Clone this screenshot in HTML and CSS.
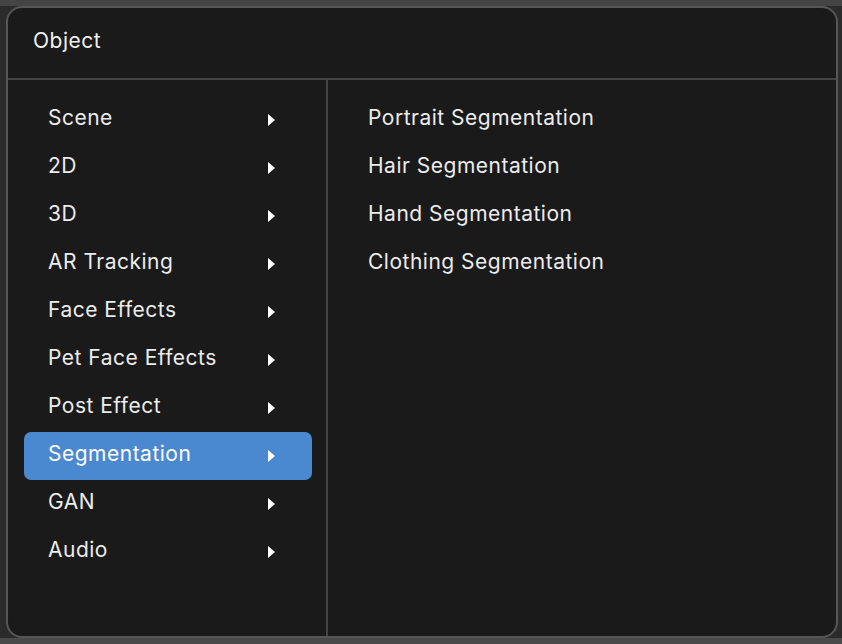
FILE: index.html
```html
<!DOCTYPE html>
<html>
<head>
<meta charset="utf-8">
<link rel="stylesheet" href="styles.css">
</head>
<body>
<div class="frame">
  <div class="dialog">
    <div class="header">Object</div>
    <div class="body">
      <ul class="menu">
        <li class="item"><span>Scene</span><i class="arrow"></i></li>
        <li class="item"><span>2D</span><i class="arrow"></i></li>
        <li class="item"><span>3D</span><i class="arrow"></i></li>
        <li class="item"><span>AR Tracking</span><i class="arrow"></i></li>
        <li class="item"><span>Face Effects</span><i class="arrow"></i></li>
        <li class="item"><span>Pet Face Effects</span><i class="arrow"></i></li>
        <li class="item"><span>Post Effect</span><i class="arrow"></i></li>
        <li class="item active"><span>Segmentation</span><i class="arrow"></i></li>
        <li class="item"><span>GAN</span><i class="arrow"></i></li>
        <li class="item"><span>Audio</span><i class="arrow"></i></li>
      </ul>
      <ul class="submenu">
        <li class="sub">Portrait Segmentation</li>
        <li class="sub">Hair Segmentation</li>
        <li class="sub">Hand Segmentation</li>
        <li class="sub">Clothing Segmentation</li>
      </ul>
    </div>
  </div>
</div>
</body>
</html>
```

FILE: styles.css
```css
html, body {
  margin: 0;
  padding: 0;
}
body {
  width: 842px;
  height: 644px;
  overflow: hidden;
  background: #4a4a4a;
  font-family: Inter, "Noto Sans", sans-serif;
}
.frame {
  height: 638px;
  background: linear-gradient(#444 0 6px, #2b2b2b 6px);
  padding: 6px 4px 0 6px;
  box-sizing: border-box;
}
.dialog {
  height: 632px;
  box-sizing: border-box;
  border: 2px solid #565656;
  border-radius: 16px;
  background: #1a1a1a;
  display: flex;
  flex-direction: column;
  overflow: hidden;
}
.header {
  height: 70px;
  flex: none;
  border-bottom: 2px solid #444;
  color: #f0f0f0;
  font-size: 21px;
  letter-spacing: 0.5px;
  padding-left: 25px;
  line-height: 66px;
}
.body {
  flex: 1;
  display: flex;
}
.menu, .submenu {
  list-style: none;
  margin: 0;
}
.menu {
  width: 320px;
  box-sizing: border-box;
  border-right: 2px solid #444;
  padding: 16px 14px 0 16px;
  flex: none;
}
.item {
  height: 48px;
  box-sizing: border-box;
  display: flex;
  align-items: center;
  justify-content: space-between;
  padding: 0 37px 5px 24px;
  color: #ececec;
  font-size: 21px;
  letter-spacing: 0.5px;
  border-radius: 7px;
}
.item.active {
  background: #4a88d0;
  color: #fff;
}
.arrow {
  width: 0;
  height: 0;
  border-top: 6px solid transparent;
  border-bottom: 6px solid transparent;
  border-left: 7px solid #fff;
  margin-top: 4px;
}
.submenu {
  flex: 1;
  padding: 16px 0 0 40px;
}
.sub {
  height: 48px;
  line-height: 43px;
  color: #ececec;
  font-size: 21px;
  letter-spacing: 0.5px;
}
```
